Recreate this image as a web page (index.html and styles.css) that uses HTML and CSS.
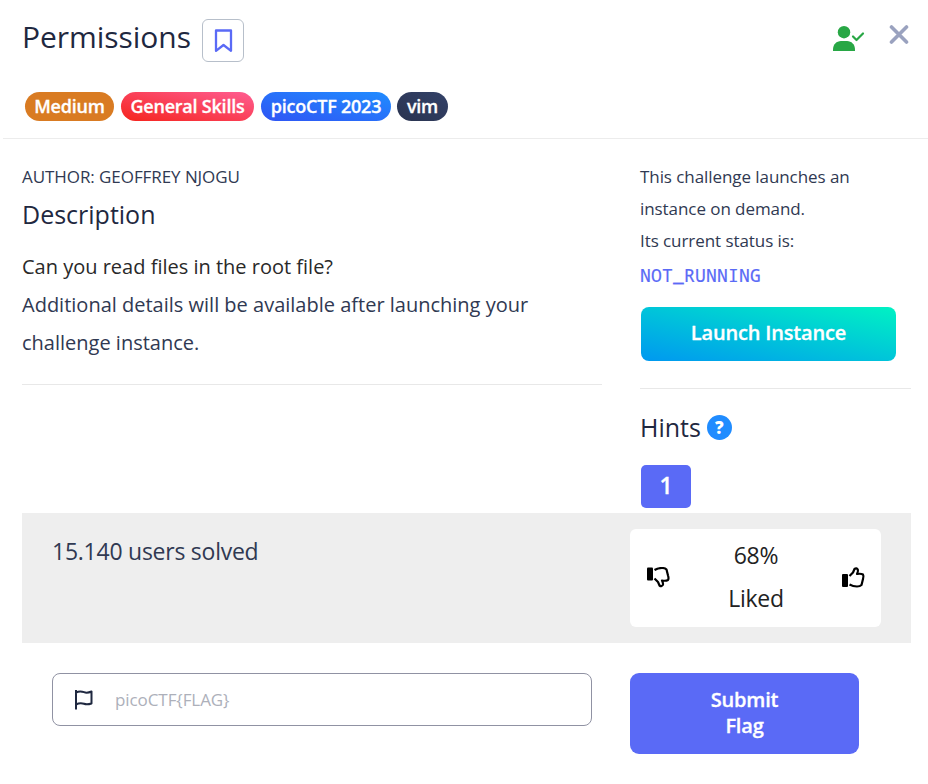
FILE: index.html
```html
<!DOCTYPE html>
<html lang="en">
<head>
<meta charset="utf-8">
<title>Permissions</title>
<link rel="stylesheet" href="styles.css">
</head>
<body>
<main class="modal">
  <header class="head">
    <div class="title-row">
      <h1 class="title">Permissions</h1>
      <button class="bookmark" aria-label="Bookmark">
        <svg width="20" height="24" viewBox="0 0 20 24" fill="none" stroke="#5a6af6" stroke-width="2.3" stroke-linejoin="round"><path d="M3 1.500H18V21.800L10.500 16L3 21.800Z"/></svg>
      </button>
      <svg class="solved" width="32" height="28" viewBox="0 0 32 28"><circle cx="11" cy="7.2" r="6.2" fill="#28a745"/><path d="M0 26V24.5C0 19.5 3.5 16 8 16H14C18.5 16 22 19.500 22 24.500V26Z" fill="#28a745"/><path d="M20 11.500L23.500 15L30 8.500" fill="none" stroke="#28a745" stroke-width="2.2" stroke-linecap="round" stroke-linejoin="round"/></svg>
      <svg class="close" width="20" height="20" viewBox="0 0 20 20"><path d="M2.500 2L17.500 17M17.500 2L2.500 17" stroke="#9aa2bf" stroke-width="3.600" stroke-linecap="round"/></svg>
    </div>
    <div class="tags">
      <span class="tag medium">Medium</span>
      <span class="tag skills">General Skills</span>
      <span class="tag event">picoCTF 2023</span>
      <span class="tag vim">vim</span>
    </div>
  </header>
  <div class="body">
    <section class="info">
      <p class="author">AUTHOR: GEOFFREY NJOGU</p>
      <h2 class="subtitle">Description</h2>
      <p class="text dark">Can you read files in the root file?</p>
      <p class="text">Additional details will be available after launching your challenge instance.</p>
      <hr class="rule">
    </section>
    <aside class="side">
      <p class="note">This challenge launches an instance on demand.<br>Its current status is:</p>
      <code class="status">NOT_RUNNING</code>
      <button class="launch">Launch Instance</button>
      <hr class="rule">
      <div class="hints"><h2 class="subtitle">Hints</h2><span class="help">?</span></div>
      <button class="hint">1</button>
    </aside>
  </div>
  <section class="stats">
    <span class="solves">15.140 users solved</span>
    <div class="rating">
      <svg class="thumb" width="24" height="22" viewBox="0 0 24 22"><g transform="translate(0 20.500) scale(1 -1)"><rect x="0" y="7" width="6" height="13" rx="1" fill="#000"/><path d="M7.500 9L11 5.500L12.500 2Q14.500 .500 15.800 2.500Q16.500 4 15 7Q19 6.300 21 7.500Q22 9 21 12L19.500 18Q18 19.500 15 19.500Q11 19.500 7.500 17.500" fill="none" stroke="#000" stroke-width="2.200" stroke-linejoin="round"/></g></svg>
      <div class="score"><span>68%</span><span>Liked</span></div>
      <svg class="thumb" width="24" height="22" viewBox="0 0 24 22"><rect x="0" y="7" width="6" height="13" rx="1" fill="#000"/><path d="M7.500 9L11 5.500L12.500 2Q14.500 .500 15.800 2.500Q16.500 4 15 7Q19 6.300 21 7.500Q22 9 21 12L19.500 18Q18 19.500 15 19.500Q11 19.500 7.500 17.500" fill="none" stroke="#000" stroke-width="2.200" stroke-linejoin="round"/></svg>
    </div>
  </section>
  <form class="submit-row">
    <label class="field">
      <svg width="20" height="21" viewBox="0 0 20 21" fill="none" stroke="#1f2840" stroke-width="2" stroke-linejoin="round"><path d="M2 1V20.500M2 3.500Q6 1.500 10 3.200Q13 4.500 17.500 2.500V14.500Q13 16 10 14.800Q6 13.500 2 15.500"/></svg>
      <input class="flag" type="text" placeholder="picoCTF{FLAG}">
    </label>
    <button class="submit" type="button">Submit<br>Flag</button>
  </form>
</main>
</body>
</html>
```
FILE: styles.css
```css
* { box-sizing: border-box; margin: 0; }
body { background: #fff; color: #303952; font-family: "Open Sans", sans-serif; }
button { border: 0; padding: 0; font-family: inherit; color: #fff; }
svg { display: block; flex: none; }
.head { height: 139px; margin-left: 3px; padding: 19px 19px 0; border-bottom: 1px solid #ececec; }
.title-row { display: flex; height: 43px; }
.title { font-size: 30px; font-weight: 400; line-height: 36px; color: #1f2840; width: 180px; letter-spacing: -.04px; }
.bookmark { width: 42px; height: 43px; display: flex; align-items: center; justify-content: center; background: #fff; border: 1px solid #b7bfca; border-radius: 6px; }
.solved { margin: 6px 24px 0 auto; }
.close { margin-top: 6px; }
.tags { display: flex; gap: 7px; margin: 30px 0 0 3px; }
.tag { height: 29px; border-radius: 15px; color: #fff; font-size: 18px; font-weight: 600; -webkit-text-stroke: .3px #fff; letter-spacing: -.22px; line-height: 28px; text-align: center; white-space: nowrap; }
.medium { width: 89px; background: #d97b22; }
.skills { width: 133px; background: linear-gradient(to top right, #f5241d, #ff5d92); }
.event { width: 130px; background: linear-gradient(to top right, #2f55f4, #208cff); }
.vim { width: 51px; margin-left: -1px; background: linear-gradient(to top right, #2a3450, #334168); }
.body { display: grid; grid-template-columns: 580px 271px; column-gap: 38px; height: 374px; padding: 22px 0 0 22px; }
.author { font-size: 17px; line-height: 32px; letter-spacing: -.07px; }
.subtitle { font-size: 25px; line-height: 30px; padding-bottom: 2px; font-weight: 400; color: #1f2840; }
.info .subtitle { margin: 6px 0 17px; }
.text { font-size: 20px; line-height: 38px; }
.dark { color: #292929; }
.rule { height: 1px; border: 0; background: #e8e8e8; }
.info .rule { margin-top: 22px; }
.note { width: 240px; font-size: 17px; line-height: 32px; letter-spacing: -.07px; }
.status { display: block; margin-top: 4px; font: 18px/28px "Noto Sans Mono", "DejaVu Sans Mono", monospace; -webkit-text-stroke: .2px #5a6af6; letter-spacing: .2px; color: #5a6af6; }
.launch { display: block; width: 255px; height: 54px; margin: 18px 0 27px 1px; border-radius: 8px; background: linear-gradient(to top right, #0098f0, #00f2c3); font-size: 20px; font-weight: 600; -webkit-text-stroke: .3px #fff; letter-spacing: -.17px; line-height: 52px; padding-bottom: 2px; }
.hints { display: flex; align-items: center; gap: 6px; margin-top: 23px; }
.help { width: 25px; height: 25px; margin-top: -2px; border-radius: 50%; background: #208cff; color: #fff; font-size: 17px; font-weight: 800; line-height: 25px; text-align: center; }
.hint { display: block; width: 50px; height: 43px; margin: 21px 0 0 1px; border-radius: 5px; background: #5a6af6; font-size: 23px; font-weight: 600; -webkit-text-stroke: .3px #fff; line-height: 40px; padding-bottom: 3px; }
.stats { display: flex; justify-content: space-between; width: 889px; height: 130px; margin-left: 22px; padding: 16px 30px; background: #eee; }
.solves { font-size: 23px; line-height: 44px; letter-spacing: -.25px; }
.rating { display: flex; align-items: center; justify-content: space-between; width: 251px; height: 98px; padding: 0 15px 0 17px; border-radius: 6px; background: #fff; }
.score { display: flex; flex-direction: column; height: 98px; padding-top: 5px; text-align: center; font-size: 23px; letter-spacing: -.25px; line-height: 43px; color: #222; margin-left: -1px; }
.submit-row { display: flex; align-items: flex-start; gap: 38px; padding: 30px 0 0 52px; }
.field { display: flex; align-items: center; width: 540px; height: 53px; padding: 0 21px; gap: 21px; border: 1px solid #9092a3; border-radius: 8px; }
.flag { flex: 1; border: 0; padding: 0; outline: 0; font: 17px "Open Sans", sans-serif; letter-spacing: -.08px; color: #303952; }
.flag::placeholder { color: #adb0ba; opacity: 1; }
.submit { width: 229px; height: 81px; border-radius: 9px; background: #5a6af6; font-size: 20px; font-weight: 600; -webkit-text-stroke: .3px #fff; letter-spacing: -.17px; line-height: 26px; padding-bottom: 2px; }
```
